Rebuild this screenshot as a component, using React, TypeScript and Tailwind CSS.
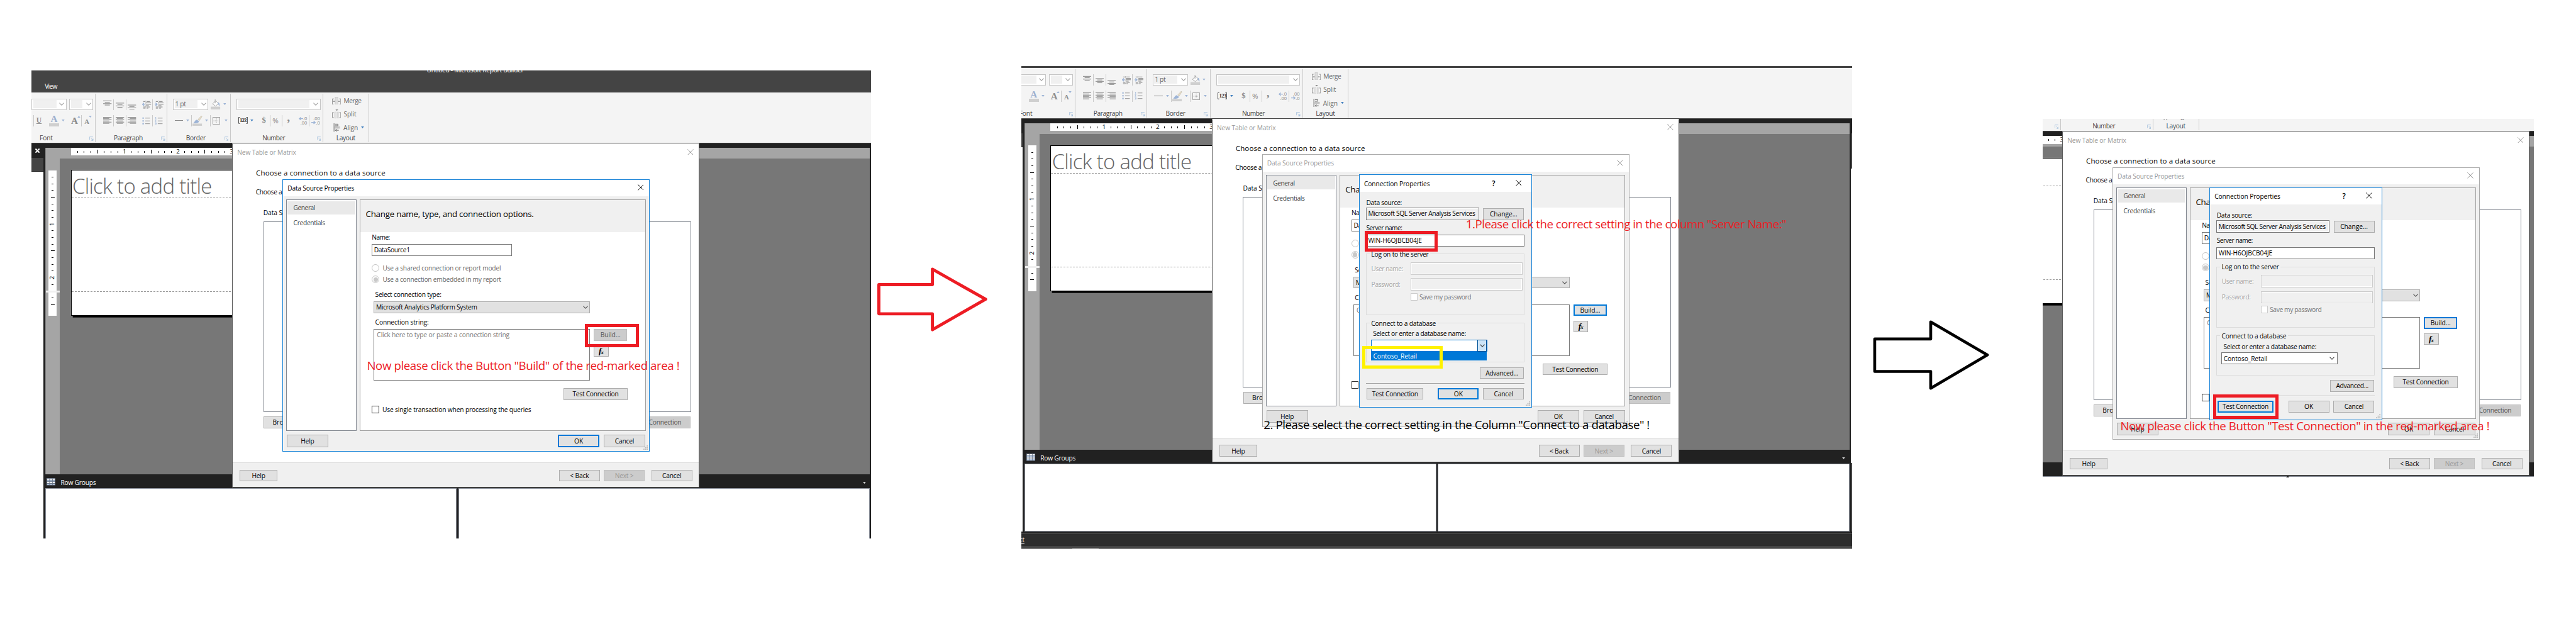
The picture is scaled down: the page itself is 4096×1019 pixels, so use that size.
import { useLayoutEffect, useRef, type ReactNode } from "react";

/* ---------- text ---------- */

/** One line of text whose tracking is adjusted so that it fills its box. */
function Fit({ children, className = "" }: { children: string; className?: string }) {
  const box = useRef<HTMLDivElement>(null);
  const text = useRef<HTMLSpanElement>(null);
  useLayoutEffect(() => {
    const b = box.current;
    const t = text.current;
    if (!b || !t) return;
    const target = b.getBoundingClientRect().width;
    t.style.letterSpacing = "0px";
    const base = t.getBoundingClientRect().width;
    t.style.letterSpacing = "1px";
    const step = t.getBoundingClientRect().width - base;
    t.style.letterSpacing = step > 0 ? `${(target - base) / step}px` : "0px";
  }, [children]);
  return (
    <div ref={box} className={`shrink-0 whitespace-nowrap ${className}`}>
      <span ref={text}>{children}</span>
    </div>
  );
}

const labelWidths: Record<string, string> = {
  Help: "w-[24px]",
  OK: "w-[16px]",
  Cancel: "w-[34px]",
  "< Back": "w-[34px]",
  "Next >": "w-[33px]",
  "Build...": "w-[36px]",
  "Test Connection": "w-[82px]",
  "Change...": "w-[49px]",
  "Advanced...": "w-[58px]",
  "Browse...": "w-[50px]",
};

type ButtonState = "normal" | "primary" | "disabled" | "faint";

function Button({ label, className, state = "normal" }: { label: string; className: string; state?: ButtonState }) {
  const look = {
    normal: "border border-[#adadad] bg-[#e1e1e1] text-black",
    primary: "border-[3px] border-[#0078d7] bg-[#e1e1e1] text-black",
    disabled: "border border-[#bfbfbf] bg-[#cccccc] text-[#555555]",
    faint: "border border-[#bfbfbf] bg-[#cccccc] text-[#9a9a9a]",
  }[state];
  return (
    <div className={`flex shrink-0 items-center justify-center leading-[16px] ${look} ${className}`}>
      <Fit className={labelWidths[label]}>{label}</Fit>
    </div>
  );
}

/* ---------- small glyphs ---------- */

function Close({ className }: { className: string }) {
  return (
    <svg viewBox="0 0 11 11" className={`h-[11px] w-[11px] shrink-0 ${className}`} fill="none" stroke="currentColor" strokeWidth="1.1">
      <path d="M.4.4l10.2 10.2M10.6.4L.4 10.6" />
    </svg>
  );
}

function Chevron({ className }: { className: string }) {
  return (
    <svg viewBox="0 0 9 6" className={`h-[6px] w-[9px] shrink-0 ${className}`} fill="none" stroke="currentColor" strokeWidth="1.2">
      <path d="M.5.7l4 4 4-4" />
    </svg>
  );
}

function Caret({ className }: { className: string }) {
  return (
    <svg viewBox="0 0 6 4" className={`h-[3.5px] w-[5.5px] shrink-0 ${className}`} fill="currentColor">
      <path d="M0 0h6L3 4z" />
    </svg>
  );
}

function Grip() {
  return (
    <svg viewBox="0 0 8 8" className="absolute right-[2px] bottom-[2px] h-[8px] w-[8px]" fill="#b8b8b8">
      <path d="M6 0h2v2H6zM3 3h2v2H3zM6 3h2v2H6zM0 6h2v2H0zM3 6h2v2H3zM6 6h2v2H6z" />
    </svg>
  );
}

function Launcher() {
  return (
    <svg viewBox="0 0 8 8" className="h-[8px] w-[7.5px]" fill="none" stroke="#a3bfdc" strokeWidth="1">
      <path d="M.5 6V.5H7M3 3l4 4M7 3.6V7H3.6" />
      <path d="M4.500 7.500h3v-3z" fill="#a3bfdc" stroke="none" />
    </svg>
  );
}

function Lines({ rows, className }: { rows: [number, number][]; className: string }) {
  return (
    <svg viewBox="0 0 15 17" className={`h-[17px] w-[15px] shrink-0 ${className}`} stroke="#777777" strokeWidth="1">
      {rows.map(([y, inset], i) => (
        <path key={i} d={`M${Math.max(inset, 0)} ${y}H${15 - Math.abs(inset)}`} />
      ))}
    </svg>
  );
}

function LeftLines({ right = false, className }: { right?: boolean; className: string }) {
  return (
    <svg viewBox="0 0 15 12" className={`h-[12px] w-[15px] shrink-0 ${className}`} stroke="#777777" strokeWidth="1">
      {[0.5, 2.6, 4.8, 7, 9.2, 11.4].map((y, i) => {
        const short = i % 2 === 1;
        return <path key={y} d={right ? `M${short ? 4 : 0} ${y}H15` : `M0 ${y}H${short ? 11 : 15}`} />;
      })}
    </svg>
  );
}

function Indent({ flip = false, className }: { flip?: boolean; className: string }) {
  return (
    <svg viewBox="0 0 16 15" className={`h-[15px] w-[16px] shrink-0 ${className}`} fill="none">
      <path d="M2 1.500h4m2 0h6M2 13.500h4m2 0h3M7 4h9M7 6.500h9M7 9h5M2 11.300h4m2 0h6" stroke="#777777" />
      <path d="M6.500 0v15" stroke="#777777" strokeWidth=".8" strokeDasharray="1 1.500" />
      <path d={flip ? "M0 6.600h3M1.500 4l2.800 2.600L1.500 9.200" : "M2 6.600h3.500M3.500 4L.7 6.600l2.800 2.600"} stroke="#9db4d6" strokeWidth="1.6" />
    </svg>
  );
}

function ListIcon({ numbered = false, className }: { numbered?: boolean; className: string }) {
  return (
    <svg viewBox="0 0 15 14" className={`h-[14px] w-[15px] shrink-0 ${className}`} fill="none">
      <path d="M5.5 2H14M5.5 7H14M5.5 12H14" stroke="#8a8a8a" />
      {numbered ? (
        <path d="M1 .5h1v3M.6 5.2h2L.8 8h2M.6 10.2h2v3h-2M1.4 11.7h1" stroke="#9db4d6" />
      ) : (
        <path d="M.5 2h2.6M.5 7h2.6M.5 12h2.6" stroke="#9db4d6" strokeWidth="2.4" />
      )}
    </svg>
  );
}

function Sep({ className }: { className: string }) {
  return <div className={`h-[20px] w-px shrink-0 bg-[#c9c9c9] ${className}`} />;
}

function Combo({ className, inner, children }: { className: string; inner: string; children?: ReactNode }) {
  return (
    <div className={`flex h-[20.5px] shrink-0 items-center justify-between border border-[#c6c6c6] bg-white pr-[3px] pl-[2px] ${className}`}>
      <div className={`flex h-[15px] items-center bg-[#f0f0f0] ${inner}`}>{children}</div>
      <Chevron className="text-[#a0a0a0]" />
    </div>
  );
}

function Group({
  className,
  label,
  labelClass,
  launcher = true,
  children,
}: {
  className: string;
  label: string;
  labelClass: string;
  launcher?: boolean;
  children: ReactNode;
}) {
  return (
    <div className={`relative flex h-[87px] shrink-0 flex-col border-r border-[#c9c9c9] ${className}`}>
      {children}
      <div className="mt-auto flex h-[16px] items-center justify-center leading-[16px] text-[#444444]">
        <Fit className={labelClass}>{label}</Fit>
      </div>
      {launcher && (
        <div className="absolute right-[3px] bottom-[2.5px]">
          <Launcher />
        </div>
      )}
    </div>
  );
}

function Ribbon() {
  return (
    <div className="flex h-[91px] border-b border-[#444444] bg-[#f4f4f4] pt-[2px]">
      <Group className="w-[115px]" label="Font" labelClass="w-[23.4px] -ml-[61px]">
        <div className="mt-[9px] flex">
          <Combo className="w-[62.6px]" inner="w-[42px]" />
          <Combo className="ml-[5px] w-[43px]" inner="w-[21px]" />
        </div>
        <div className="mt-[9px] flex h-[20px] items-center font-['Liberation_Serif'] font-bold text-[#8c8c8c]">
          <Sep className="ml-[3px]" />
          <span className="ml-[5px] w-[11px] text-[13px] leading-[16px] underline">U</span>
          <div className="ml-[12px] flex w-[17.5px] flex-col items-center">
            <span className="text-[17px] leading-[15px] text-[#9db0cf]">A</span>
            <div className="h-[5px] w-full bg-[#cfcfcf]" />
          </div>
          <Caret className="ml-[5px] text-[#9db4d6]" />
          <span className="ml-[11px] w-[11px] text-[17px] leading-[18px]">A</span>
          <Caret className="mb-[13px] rotate-180 text-[#9db4d6]" />
          <Sep className="ml-[1.5px]" />
          <span className="mt-[3px] ml-[5px] w-[8px] text-[12px] leading-[16px]">A</span>
          <Caret className="mb-[13px] text-[#9db4d6]" />
        </div>
      </Group>
      <Group className="w-[128.3px]" label="Paragraph" labelClass="w-[51.7px] -ml-[11px]">
        <div className="mt-[10px] flex h-[20px] items-center">
          <Lines className="ml-[13.5px]" rows={[[1.5, 0], [4, 3], [6.5, 0], [9, 3]]} />
          <Sep className="ml-[2.5px]" />
          <Lines className="ml-[4px]" rows={[[5.5, 0], [8, 3], [10.5, 0], [13, 3]]} />
          <Sep className="ml-[2.5px]" />
          <Lines className="ml-[3px]" rows={[[9, 0], [11.5, 3], [14, 0], [16.5, 3]]} />
          <Indent className="ml-[11px]" />
          <Sep className="ml-[2px]" />
          <Indent flip className="ml-[3px]" />
        </div>
        <div className="mt-[8.5px] flex h-[20px] items-center">
          <LeftLines className="ml-[13.5px]" />
          <Sep className="ml-[2.5px]" />
          <svg viewBox="0 0 15 12" className="ml-[4px] h-[12px] w-[15px] shrink-0" stroke="#777777">
            <path d="M0 .5h15M2 2.6h11M0 4.8h15M2 7h11M0 9.2h15M2 11.4h11" />
          </svg>
          <Sep className="ml-[2.5px]" />
          <LeftLines right className="ml-[3px]" />
          <ListIcon className="ml-[11px]" />
          <Sep className="ml-[3px]" />
          <ListIcon numbered className="ml-[3px]" />
        </div>
      </Group>
      <Group className="w-[113px]" label="Border" labelClass="w-[35px] -ml-[11px]">
        <div className="mt-[9px] flex items-center">
          <Combo className="ml-[9.5px] w-[63.5px]" inner="w-[41px] text-[#666666]">
            <Fit className="ml-px w-[19px]">1 pt</Fit>
          </Combo>
          <svg viewBox="0 0 18 18" className="ml-[4px] h-[18px] w-[18px]" fill="none">
            <path d="M3.500 8L9 2.500l5 5L8.500 12z" stroke="#9a9a9a" fill="#ffffff" />
            <path d="M8 0v7" stroke="#9a9a9a" />
            <path d="M13 5c3 1 3 3 3 7-2-1-2-3-3-4z" fill="#9db4d6" />
            <path d="M0 13h17v5H0z" fill="#cfcfcf" />
          </svg>
          <Caret className="ml-[4px] text-[#9db4d6]" />
        </div>
        <div className="mt-[9px] flex h-[20px] items-center">
          <div className="ml-[12.500px] h-px w-[15px] bg-[#8a8a8a]" />
          <Caret className="ml-[6px] text-[#9db4d6]" />
          <Sep className="ml-[3px]" />
          <svg viewBox="0 0 18 18" className="ml-[2px] h-[18px] w-[18px]" fill="none">
            <path d="M16 0L10 6.500l2 2.500 5-7.500z" fill="#eadfc9" stroke="#b3ad9e" strokeWidth=".6" />
            <path d="M1 13c3-1 3-5 7-6l4 3c-1 3-5 4-11 3z" fill="#9db4d6" />
            <path d="M0 14h17v4H0z" fill="#cfcfcf" />
          </svg>
          <Caret className="ml-[4px] text-[#9db4d6]" />
          <Sep className="ml-[3.500px]" />
          <svg viewBox="0 0 14 14" className="ml-[4px] h-[13.500px] w-[13.500px]" fill="none" stroke="#8a8a8a">
            <path d="M.5.5h13v13H.5z" />
            <path d="M7 2v10M2 7h10" strokeDasharray="1 1.500" />
          </svg>
          <Caret className="ml-[7px] text-[#9db4d6]" />
        </div>
      </Group>
      <Group className="w-[165px]" label="Number" labelClass="w-[40px] -ml-[11px]">
        <div className="mt-[9px] flex">
          <Combo className="ml-[10.5px] w-[149.500px]" inner="w-[127px]" />
        </div>
        <div className="mt-[9px] flex h-[20px] items-center text-[#8a8a8a]">
          <div className="relative ml-[13px] flex h-[12px] w-[17px] items-center justify-center font-['Liberation_Serif'] text-[10px] leading-[12px] font-bold text-[#333333]">
            <svg viewBox="0 0 17 12" className="absolute inset-0 h-[12px] w-[17px]" fill="none" stroke="#333333">
              <path d="M3 .5H.5v11H3M14 .5h2.500v11H14" />
            </svg>
            <Fit className="w-[12px]">123</Fit>
          </div>
          <Caret className="ml-[5px] text-[#3f7fbf]" />
          <span className="ml-[15px] w-[8px] font-['Liberation_Serif'] text-[14px] font-bold">$</span>
          <Sep className="ml-[6px]" />
          <span className="ml-[4px] w-[13px] text-[13px]">%</span>
          <Sep className="ml-[4px]" />
          <span className="-mt-[10px] ml-[8px] w-[6px] font-['Liberation_Serif'] text-[20px] font-bold">,</span>
          <div className="ml-[14px] flex w-[16px] flex-col items-end text-[8.500px] leading-[7.500px]">
            <span className="flex items-center">
              <svg viewBox="0 0 8 6" className="h-[6px] w-[8px]" stroke="#9db4d6" strokeWidth="1.500" fill="none">
                <path d="M1 3h7M4 .5L1 3l3 2.500" />
              </svg>
              .0
            </span>
            <span>.00</span>
          </div>
          <Sep className="ml-[3px]" />
          <div className="ml-[3px] flex w-[16px] flex-col items-end text-[8.500px] leading-[7.500px]">
            <span>.00</span>
            <span className="flex items-center">
              <svg viewBox="0 0 8 6" className="h-[6px] w-[8px]" stroke="#9db4d6" strokeWidth="1.500" fill="none">
                <path d="M0 3h7M4 .5L7 3 4 5.500" />
              </svg>
              .0
            </span>
          </div>
        </div>
      </Group>
      <Group className="w-[81.500px]" label="Layout" labelClass="w-[34px]" launcher={false}>
        <div className="flex flex-col pt-[5px] pl-[16px] leading-[16px] text-[#666666]">
          <div className="flex h-[16px] items-center">
            <svg viewBox="0 0 16 14" className="h-[14px] w-[16px]" fill="none" stroke="#8a8a8a">
              <path d="M3 3.500H.5v10H3M13 3.500h2.500v10H13" />
              <path d="M5.500.5h5v13h-5z" fill="#dedede" stroke="#c9c9c9" />
              <path d="M2 8h3M14 8h-3" stroke="#777777" strokeWidth="1.500" />
            </svg>
            <Fit className="ml-[4.500px] w-[31.500px]">Merge</Fit>
          </div>
          <div className="mt-[8px] flex h-[16px] items-center">
            <svg viewBox="0 0 16 16" className="h-[16px] w-[16px]" fill="none" stroke="#8a8a8a">
              <path d="M3 5.500H.5v9H3M13 5.500h2.500v9H13" />
              <path d="M4.500 4.500h3v11h-3zM9.500 4.500h2v11h-2z" fill="#e4e4e4" stroke="#c9c9c9" strokeWidth=".7" />
              <path d="M6 0h5L8.500 2.500z" fill="#8a8a8a" stroke="none" />
            </svg>
            <Fit className="ml-[4.500px] w-[22.500px]">Split</Fit>
          </div>
          <div className="mt-[8px] flex h-[16px] items-center">
            <svg viewBox="0 0 16 15" className="h-[15px] w-[16px]" fill="none" stroke="#555555">
              <path d="M3.500 0v15M5.500 1.500h5v3h-5M6 12.500h6M8.500 10L6 12.500 8.500 15" />
              <path d="M5 5.500h9v4H5z" fill="#c3c3c3" stroke="none" />
            </svg>
            <Fit className="ml-[4px] w-[26px]">Align</Fit>
            <Caret className="ml-[5.500px] text-[#3f7fbf]" />
          </div>
        </div>
      </Group>
    </div>
  );
}

/* ---------- report canvas ---------- */

const eighths = Array.from({ length: 26 }, (_, i) => i + 1);

function HorizontalRuler() {
  return (
    <div className="flex h-[14px] w-[1100px] items-center bg-white pl-[6px] text-[11px] leading-[14px] text-black">
      {eighths.map((n) => (
        <div key={n} className="flex w-[11.97px] shrink-0 justify-center">
          {n % 8 === 0 ? n / 8 : <div className={n % 4 === 0 ? "h-[7px] w-px bg-black" : "h-[3.500px] w-px bg-black"} />}
        </div>
      ))}
    </div>
  );
}

function VerticalRuler() {
  return (
    <div className="relative flex h-[542px] w-[25px] shrink-0 flex-col items-center bg-[#a5a5a5] pt-[21px]">
      <div className="flex h-[260px] w-[14.500px] flex-col items-center bg-white pt-[6px] text-[11px] text-black">
        {eighths.slice(0, 20).map((n) => (
          <div key={n} className="flex h-[12px] w-full shrink-0 items-center justify-center leading-[12px]">
            {n % 8 === 0 ? (
              <span className="-rotate-90">{n / 8}</span>
            ) : (
              <div className={n % 4 === 0 ? "h-px w-[7px] bg-black" : "h-px w-[3px] bg-black"} />
            )}
          </div>
        ))}
      </div>
      <div className="absolute top-[236px] left-0 h-[3px] w-full bg-[#f0f0f0]" />
    </div>
  );
}

function ReportPage() {
  return (
    <div className="mt-[20px] ml-[20px] h-[260.500px] w-[1000px] border border-black bg-white shadow-[3px_3px_0_0_#000000]">
      <div className="h-[50px] border-b border-dashed border-[#9a9a9a] pl-[1.500px] text-[37px] leading-[57px] font-light text-[#666666]">
        <Fit className="w-[249px]">Click to add title</Fit>
      </div>
      <div className="h-[167px] border-b border-dashed border-[#9a9a9a]" />
    </div>
  );
}

function RowGroupsBar() {
  return (
    <div className="flex h-[25px] items-center bg-[#212121] pt-[2px] text-white">
      <svg viewBox="0 0 16 13" className="ml-[3px] h-[13px] w-[16px] shrink-0">
        <path d="M0 0h16v13H0z" fill="#6a7688" />
        <path d="M1 1h4v2H1zM6 1h4v2H6zM11 1h4v2h-4zM1 7h4v2H1zM6 7h4v2H6zM11 7h4v2h-4z" fill="#ffffff" />
        <path d="M1 4h4v2H1zM6 4h4v2H6zM11 4h4v2h-4zM1 10h4v2H1zM6 10h4v2H6zM11 10h4v2h-4z" fill="#b9cde6" />
      </svg>
      <Fit className="mt-[3px] ml-[9px] w-[63px] leading-[16px]">Row Groups</Fit>
      <Caret className="mt-[4px] mr-[7px] ml-auto text-[#d0d0d0]" />
    </div>
  );
}

function ReportBuilder({ children }: { children: ReactNode }) {
  return (
    <div className="relative flex h-[897px] w-[1503px] shrink-0 flex-col">
      <div className="flex h-[39px] shrink-0 flex-col bg-[#444444] text-white">
        <Fit className="-mt-[9.500px] ml-[706px] w-[173px] leading-[16px]">Untitled - Microsoft Report Builder</Fit>
        <Fit className="mt-[14px] ml-[24px] w-[22px] leading-[16px]">View</Fit>
      </div>
      <Ribbon />
      <div className="flex h-[737px] shrink-0">
        <div className="w-[21px] shrink-0">
          <div className="flex h-[26px] items-center justify-center bg-[#212121]">
            <svg viewBox="0 0 8 8" className="h-[8px] w-[8px]" stroke="#ffffff" strokeWidth="2.200">
              <path d="M.5.5l7 7M7.500.5l-7 7" />
            </svg>
          </div>
          <div className="h-[25px] border-b border-[#212121] bg-[#444444]" />
        </div>
        <div className="flex w-[1476px] shrink-0 flex-col border-l-4 border-[#212121]">
          <div className="h-[8px] shrink-0 bg-[#212121]" />
          <div className="flex h-[583px] shrink-0 flex-col overflow-hidden border-l border-[#8a8a8a] bg-[#a5a5a5]">
            <div className="h-[19px] shrink-0 pl-[45px]">
              <HorizontalRuler />
            </div>
            <div className="flex h-[564px]">
              <div className="h-full bg-[#a5a5a5]">
                <VerticalRuler />
              </div>
              <div className="min-w-0 flex-1 overflow-hidden bg-[#777777]">
                <ReportPage />
              </div>
            </div>
          </div>
          <RowGroupsBar />
          <div className="flex h-[121px] shrink-0 bg-[#212121]">
            <div className="w-[735px] border border-[#8a8f99] bg-white" />
            <div className="ml-[3px] flex-1 border border-[#8a8f99] bg-white" />
          </div>
        </div>
        <div className="w-[3px] shrink-0 bg-[#212121]" />
        <div className="w-[3px] shrink-0 bg-[#444444]">
          <div className="h-[26px] bg-[#212121]" />
          <div className="mt-[63px] h-[526px] bg-white" />
        </div>
      </div>
      <div className="flex h-[30px] shrink-0 flex-col bg-[#2d2d2d]">
        <div className="h-[4px] border-b border-[#555555] bg-[#212121]" />
        <div className="flex h-[22px] items-center">
          <Fit className="-ml-[19px] w-[43px] text-white underline">Connect</Fit>
        </div>
        <div className="h-[3px] bg-[#444444]" />
        <div className="h-px bg-black">
          <div className="ml-[109px] h-px w-[48px] bg-[#444444]" />
        </div>
      </div>
      {children}
    </div>
  );
}

/* ---------- dialogs ---------- */

function Checkbox({ className }: { className: string }) {
  return <div className={`h-[13.500px] w-[13px] shrink-0 border bg-white ${className}`} />;
}

function Radio({ checked = false }: { checked?: boolean }) {
  return (
    <div className="flex h-[13.500px] w-[13.500px] shrink-0 items-center justify-center rounded-full border border-[#c4c4c4] bg-white">
      {checked && <div className="h-[8px] w-[8px] rounded-full bg-[#c9c9c9]" />}
    </div>
  );
}

function TableWizard({ children }: { children: ReactNode }) {
  return (
    <div className="absolute top-[130px] left-[358.600px] flex h-[614px] w-[834.500px] flex-col border border-[#5a5a5a] border-t-white bg-white leading-[16px]">
      <div className="flex h-[30px] shrink-0 items-center justify-between pr-[9px] pl-[8px] text-[#999999]">
        <Fit className="w-[105px]">New Table or Matrix</Fit>
        <Close className="-mt-[2px]" />
      </div>
      <Fit className="mt-[11.500px] ml-[41.500px] w-[231px] text-[13px] leading-[20px]">Choose a connection to a data source</Fit>
      <Fit className="mt-[16.500px] ml-[41px] w-[47px]">Choose a</Fit>
      <Fit className="mt-[21px] ml-[54.500px] w-[41px]">Data So</Fit>
      <div className="mt-[7.500px] ml-[54.500px] h-[340px] w-[764px] shrink-0 border border-[#828790]" />
      <div className="mt-[8px] ml-[55px] flex w-[762.500px] justify-between">
        <Button label="Browse..." className="h-[21px] w-[82px]" />
        <Button label="Test Connection" state="disabled" className="h-[21px] w-[115px]" />
      </div>
      <div className="mt-auto flex h-[43.500px] border-t border-[#dcdcdc] bg-[#f0f0f0] pt-[12px] pl-[12.500px]">
        <Button label="Help" className="h-[21px] w-[67px]" />
        <Button label="< Back" className="ml-[503px] h-[21px] w-[73px]" />
        <Button label="Next >" state="faint" className="ml-[7px] h-[21px] w-[73px]" />
        <Button label="Cancel" className="ml-[12px] h-[21px] w-[73px]" />
      </div>
      {children}
    </div>
  );
}

function DataSourceDialog({ active = false }: { active?: boolean }) {
  return (
    <div
      className={`absolute top-[62.500px] left-[88.600px] flex h-[487px] w-[656px] flex-col border bg-[#f0f0f0] text-black ${
        active ? "border-[#1883d7]" : "border-[#aaaaaa]"
      }`}
    >
      <div className={`flex h-[29.600px] shrink-0 items-center justify-between bg-white pr-[10px] pl-[8px] ${active ? "" : "text-[#999999]"}`}>
        <Fit className="w-[119px]">Data Source Properties</Fit>
        <Close className="-mt-[2px]" />
      </div>
      <div className="mt-[6px] ml-[5.500px] flex h-[413px] shrink-0">
        <div className="w-[126px] shrink-0 border border-[#828790] bg-white p-[1.500px] text-[#444444]">
          <div className="flex h-[23.500px] items-center bg-[#e9e9e9] pl-[10.500px]">
            <Fit className="w-[38.500px]">General</Fit>
          </div>
          <Fit className="mt-[7px] ml-[10.500px] w-[56.500px]">Credentials</Fit>
        </div>
        <div className="ml-[6px] flex w-[510px] shrink-0 flex-col border border-[#a0a0a0] bg-white">
          <div className="h-[57px] shrink-0 bg-[#f0f0f0] pt-[13px] pl-[9px]">
            <Fit className="w-[300px] text-[15px] leading-[24px]">Change name, type, and connection options.</Fit>
          </div>
          <Fit className="mt-[1px] ml-[20px] w-[32px]">Name:</Fit>
          <div className="mt-[4px] ml-[19.800px] flex h-[22px] w-[250px] items-center border border-[#7a7a7a] pl-[3px]">
            <Fit className="-mt-px w-[64px]">DataSource1</Fit>
          </div>
          <div className="mt-[13.500px] ml-[19.800px] flex h-[16px] items-center text-[#666666]">
            <Radio />
            <Fit className="ml-[6px] w-[211px]">Use a shared connection or report model</Fit>
          </div>
          <div className="mt-[4px] ml-[19.800px] flex h-[16px] items-center text-[#666666]">
            <Radio checked />
            <Fit className="ml-[6px] w-[211.500px]">Use a connection embedded in my report</Fit>
          </div>
          <Fit className="mt-[11px] ml-[26px] w-[118px]">Select connection type:</Fit>
          <div className="mt-[4.500px] ml-[23px] flex h-[20.500px] w-[386.700px] items-center justify-between border border-[#adadad] bg-[#e1e1e1] pr-[3px] pl-[3.500px]">
            <Fit className="w-[180.500px]">Microsoft Analytics Platform System</Fit>
            <Chevron className="text-[#555555]" />
          </div>
          <Fit className="mt-[8.500px] ml-[26px] w-[95.500px]">Connection string:</Fit>
          <div className="mt-[4px] ml-[23px] flex h-[92.500px] shrink-0">
            <div className="w-[386.700px] shrink-0 border border-[#7a7a7a] pt-[1px] pl-[5px] text-[#777777]">
              <Fit className="w-[236.500px]">Click here to type or paste a connection string</Fit>
            </div>
            <div className="ml-[7px]">
              <Button label="Build..." state={active ? "disabled" : "primary"} className="h-[21px] w-[59px]" />
              <div className="mt-[8px] flex h-[20.500px] w-[26px] items-center justify-center border border-[#adadad] bg-[#e1e1e1] font-['Liberation_Serif'] text-[15px] font-bold italic">
                f<span className="-ml-px pt-[4px] text-[10px]">x</span>
              </div>
            </div>
          </div>
          <Button label="Test Connection" className="mt-[13px] ml-[362px] h-[21px] w-[115px]" />
          <div className="mt-[9.800px] ml-[19.800px] flex h-[16px] items-center">
            <Checkbox className="border-[#333333]" />
            <Fit className="ml-[6px] w-[265.500px]">Use single transaction when processing the queries</Fit>
          </div>
        </div>
      </div>
      <div className="mt-[7px] ml-[6.700px] flex">
        <Button label="Help" className="h-[22px] w-[74px]" />
        <Button label="OK" state={active ? "primary" : "normal"} className="ml-[410.300px] h-[22px] w-[74px]" />
        <Button label="Cancel" className="ml-[7.700px] h-[22px] w-[74px]" />
      </div>
      <Grip />
    </div>
  );
}

function FieldGroup({ legend, legendClass, className, children }: { legend: string; legendClass: string; className: string; children: ReactNode }) {
  return (
    <div className={`ml-[11.700px] flex w-[282.700px] shrink-0 flex-col border border-[#dcdcdc] ${className}`}>
      <div className="-mt-[8.300px] ml-[5px] flex self-start bg-[#f0f0f0] px-[3px]">
        <Fit className={legendClass}>{legend}</Fit>
      </div>
      {children}
    </div>
  );
}

function ConnectionDialog({ listOpen = false }: { listOpen?: boolean }) {
  return (
    <div className="absolute top-[98.500px] left-[261.600px] flex h-[416px] w-[308.600px] flex-col border border-[#1883d7] bg-[#f0f0f0] text-black">
      <div className="flex h-[29.800px] shrink-0 items-center bg-white pl-[8px]">
        <Fit className="w-[117.500px]">Connection Properties</Fit>
        <span className="ml-auto text-[13px] font-semibold">?</span>
        <Close className="-mt-[2px] mr-[17px] ml-[36px]" />
      </div>
      <Fit className="mt-[11.500px] ml-[12px] w-[63.500px]">Data source:</Fit>
      <div className="mt-[0.700px] ml-[11.700px] flex">
        <div className="flex h-[22px] w-[202px] shrink-0 items-center overflow-hidden border border-[#7a7a7a] bg-[#f0f0f0] pl-[2.500px] shadow-[inset_0_0_0_1px_#ffffff]">
          <Fit className="-mt-px w-[191px]">Microsoft SQL Server Analysis Services</Fit>
        </div>
        <Button label="Change..." className="mt-[1px] ml-[7px] h-[21px] w-[73px]" />
      </div>
      <Fit className="mt-[6px] ml-[12px] w-[64px]">Server name:</Fit>
      <div className="mt-[4px] ml-[11.700px] flex h-[21.800px] w-[282.700px] shrink-0 items-center border border-[#7a7a7a] bg-white pl-[2.500px]">
        <Fit className="-mt-px w-[96px]">WIN-H6OJBCB04JE</Fit>
      </div>
      <FieldGroup legend="Log on to the server" legendClass="w-[102.500px]" className="mt-[12.500px] h-[109.300px]">
        <div className="mt-[6.800px] ml-[8.300px] flex h-[22px] items-center text-[#a6a6a6]">
          <div className="w-[69.800px] [text-shadow:1px_1px_0_#ffffff]">
            <Fit className="w-[56.500px]">User name:</Fit>
          </div>
          <div className="h-[22px] w-[200px] border border-[#cccccc] shadow-[inset_0_0_0_1px_#ffffff]" />
        </div>
        <div className="mt-[6.200px] ml-[8.300px] flex h-[22px] items-center text-[#a6a6a6]">
          <div className="w-[69.800px] [text-shadow:1px_1px_0_#ffffff]">
            <Fit className="w-[51.500px]">Password:</Fit>
          </div>
          <div className="h-[22px] w-[200px] border border-[#cccccc] shadow-[inset_0_0_0_1px_#ffffff]" />
        </div>
        <div className="mt-[3.600px] ml-[78px] flex h-[16px] items-center text-[#777777]">
          <Checkbox className="border-[#cccccc]" />
          <Fit className="ml-[3px] w-[92.500px]">Save my password</Fit>
        </div>
      </FieldGroup>
      <FieldGroup legend="Connect to a database" legendClass="w-[115.500px]" className="mt-[13.800px] h-[71.200px]">
        <Fit className="mt-[3px] ml-[11.200px] w-[166px]">Select or enter a database name:</Fit>
        <div
          className={`relative mt-[2.800px] ml-[7.900px] flex h-[21px] w-[207px] shrink-0 items-center border bg-white ${
            listOpen ? "border-[#0078d7]" : "justify-between border-[#7a7a7a] pr-[4px] pl-[2.500px]"
          }`}
        >
          {listOpen ? (
            <>
              <div className="-my-px -mr-px ml-auto flex h-[21px] w-[17px] items-center justify-center border border-[#005499] bg-[#cce4f7]">
                <Chevron className="text-[#444444]" />
              </div>
              <div className="absolute top-[19.500px] -right-px -left-px flex h-[16px] items-center bg-[#0078d7] pl-[3.500px] text-white">
                <Fit className="w-[78px]">Contoso_Retail</Fit>
              </div>
            </>
          ) : (
            <>
              <Fit className="w-[78px]">Contoso_Retail</Fit>
              <Chevron className="text-[#444444]" />
            </>
          )}
        </div>
      </FieldGroup>
      <Button label="Advanced..." className="mt-[8.200px] ml-[214.500px] h-[21px] w-[79px]" />
      <div className="mt-[7.400px] ml-[11.700px] h-[2px] w-[282.700px] shrink-0 border-t border-[#a0a0a0] bg-white" />
      <div className="mt-[6.700px] ml-[12.900px] flex">
        <Button label="Test Connection" state={listOpen ? "normal" : "primary"} className="h-[21px] w-[101px]" />
        <Button label="OK" state={listOpen ? "primary" : "normal"} className="ml-[26px] h-[21px] w-[73px]" />
        <Button label="Cancel" className="ml-[7.700px] h-[21px] w-[73px]" />
      </div>
      <Grip />
    </div>
  );
}

/* ---------- annotations ---------- */

function Mark({ className }: { className: string }) {
  return <div className={`absolute ${className}`} />;
}

function Note({ className, children }: { className: string; children: string }) {
  return <Fit className={`absolute text-[21px] leading-[28px] ${className}`}>{children}</Fit>;
}

export default function App() {
  return (
    <div className="flex h-[1144px] w-[4600px] items-start overflow-hidden bg-white font-['Open_Sans','Noto_Sans',sans-serif] text-[11.500px] text-black [zoom:0.890435]">
      <div className="mt-[126px] ml-[56px] h-[835px] w-[1499px] shrink-0 overflow-hidden">
        <ReportBuilder>
          <TableWizard>
            <DataSourceDialog active />
            <Mark className="top-[321px] left-[628.300px] h-[41.500px] w-[97px] border-[5.700px] border-[#ed1c24]" />
            <Note className="top-[382px] left-[239.500px] w-[558px] text-[#ed1c24]">
              {'Now please click the Button "Build" of the red-marked area !'}
            </Note>
          </TableWizard>
        </ReportBuilder>
      </div>

      <svg viewBox="0 0 200 120" className="mt-[474px] ml-[9px] h-[120px] w-[200px] shrink-0" fill="none" stroke="#ed1c24" strokeWidth="5.500" strokeLinejoin="round">
        <path d="M5 34.300h95.600V6.700l95 53.600-95 54.400V86.300H5z" />
      </svg>

      <div className="mt-[118px] ml-[60px] h-[861px] w-[1483px] shrink-0 overflow-hidden">
        <div className="-mt-[36px] -ml-[18.600px]">
          <ReportBuilder>
            <TableWizard>
              <DataSourceDialog />
              <ConnectionDialog listOpen />
              <Mark className="top-[199.200px] left-[272px] h-[37.200px] w-[130px] border-[5.700px] border-[#ed1c24]" />
              <Mark className="top-[404px] left-[267.700px] h-[41.300px] w-[143.500px] border-[5.700px] border-[#fff200]" />
              <Note className="top-[173px] left-[452.500px] w-[572px] text-[#ed1c24]">
                {'1.Please click the correct setting in the column "Server Name:"'}
              </Note>
              <Note className="top-[532px] left-[91.500px] w-[689px] text-black">
                {'2. Please select the correct setting in the Column "Connect to a database" !'}
              </Note>
            </TableWizard>
          </ReportBuilder>
        </div>
      </div>

      <svg viewBox="0 0 210 124" className="mt-[572px] ml-[36px] h-[124px] w-[210px] shrink-0" fill="none" stroke="#000000" strokeWidth="5.200" strokeLinejoin="round">
        <path d="M4.400 33.500h100V3.100l101.100 59-101.100 59.400V91.600H4.400z" />
      </svg>

      <div className="mt-[212px] ml-[95px] h-[640px] w-[877px] shrink-0 overflow-hidden">
        <div className="-mt-[107.300px] -ml-[323.900px]">
          <ReportBuilder>
            <TableWizard>
              <DataSourceDialog />
              <ConnectionDialog />
              <Mark className="top-[468.300px] left-[268.200px] h-[44.300px] w-[116.500px] border-[5.700px] border-[#ed1c24]" />
              <Note className="top-[510.500px] left-[102.500px] w-[659px] text-[#ed1c24]">
                {'Now please click the Button "Test Connection" in the red-marked area !'}
              </Note>
            </TableWizard>
          </ReportBuilder>
        </div>
      </div>
    </div>
  );
}
